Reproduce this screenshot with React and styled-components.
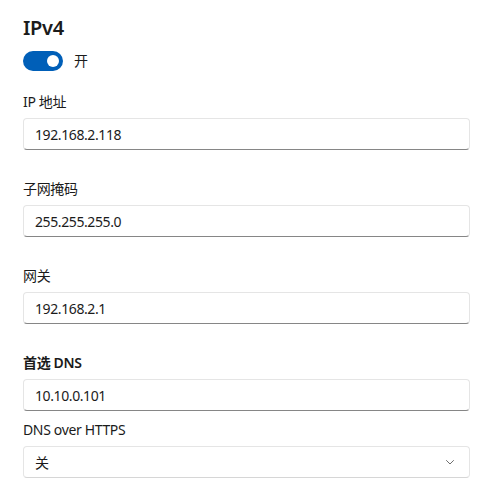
import styled, { createGlobalStyle } from "styled-components";

const GlobalStyle = createGlobalStyle`
  html, body {
    margin: 0;
    padding: 0;
    background: #ffffff;
  }
  body {
    font-family: "Segoe UI", "Noto Sans", "Noto Sans CJK SC", sans-serif;
    color: #1b1b1b;
    -webkit-font-smoothing: antialiased;
  }
`;

const Page = styled.div`
  width: 488px;
  height: 493px;
  box-sizing: border-box;
  padding: 14px 18px 0 23px;
  display: flex;
  flex-direction: column;
`;

const Title = styled.h2`
  margin: 0;
  font-size: 20px;
  line-height: 28px;
  font-weight: 600;
  letter-spacing: -0.3px;
`;

const ToggleRow = styled.div`
  display: flex;
  align-items: center;
  gap: 11px;
  margin: 9px 0 21px;
  font-size: 14px;
  line-height: 20px;
`;

const Track = styled.div`
  position: relative;
  width: 40px;
  height: 20px;
  border-radius: 10px;
  background: ${(p) => (p.on ? "#005fb8" : "#ffffff")};
  border: ${(p) => (p.on ? "none" : "1px solid #8a8a8a")};
  box-sizing: border-box;
`;

const Knob = styled.span`
  position: absolute;
  top: 4px;
  left: ${(p) => (p.on ? "24px" : "4px")};
  width: 12px;
  height: 12px;
  border-radius: 50%;
  background: ${(p) => (p.on ? "#ffffff" : "#5c5c5c")};
`;

const Field = styled.div`
  display: flex;
  flex-direction: column;
  gap: 6px;
  margin-bottom: ${(p) => p.gap}px;
`;

const Label = styled.label`
  font-size: 14px;
  line-height: 20px;
  letter-spacing: -0.35px;
  font-weight: ${(p) => (p.strong ? 600 : 400)};
`;

const TextBox = styled.div`
  height: 32px;
  box-sizing: border-box;
  padding: 0 11px;
  display: flex;
  align-items: center;
  border: 1px solid #e5e5e5;
  border-bottom-color: #868686;
  border-radius: 4px;
  background: #ffffff;
  font-size: 14px;
  letter-spacing: -0.4px;
`;

const Select = styled(TextBox)`
  justify-content: space-between;
  border-bottom-color: #d6d6d6;
  padding-right: 15px;
`;

const Chevron = () => (
  <svg width="8" height="5" viewBox="0 0 8 5" fill="none">
    <path d="M0.5 0.5 L4 4 L7.5 0.5" stroke="#6e6e6e" strokeWidth="1" strokeLinecap="round" strokeLinejoin="round" />
  </svg>
);

const fields = [
  { label: "IP 地址", value: "192.168.2.118" },
  { label: "子网掩码", value: "255.255.255.0" },
  { label: "网关", value: "192.168.2.1" },
  { label: "首选 DNS", value: "10.10.0.101", strong: true, gap: 9 },
];

export default function App() {
  return (
    <>
      <GlobalStyle />
      <Page>
        <Title>IPv4</Title>
        <ToggleRow>
          <Track on>
            <Knob on />
          </Track>
          开
        </ToggleRow>
        {fields.map((f) => (
          <Field key={f.label} gap={f.gap ?? 29}>
            <Label strong={f.strong}>{f.label}</Label>
            <TextBox>{f.value}</TextBox>
          </Field>
        ))}
        <Field gap={0}>
          <Label>DNS over HTTPS</Label>
          <Select>
            关
            <Chevron />
          </Select>
        </Field>
      </Page>
    </>
  );
}
